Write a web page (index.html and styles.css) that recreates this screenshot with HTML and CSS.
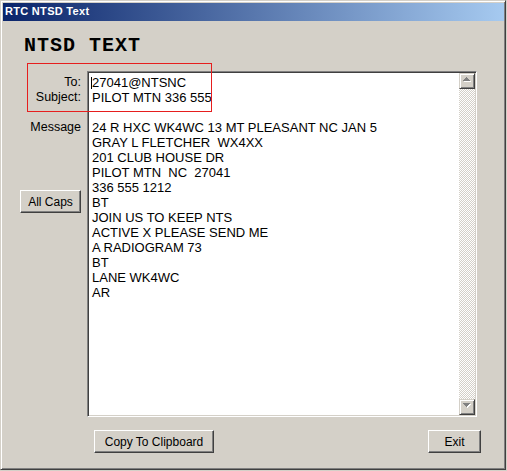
FILE: index.html
```html
<!DOCTYPE html>
<html>
<head>
<meta charset="utf-8">
<title>RTC NTSD Text</title>
<link rel="stylesheet" href="styles.css">
</head>
<body>
<div class="window">
  <div class="titlebar">RTC NTSD Text</div>
  <div class="client">
    <div class="heading">NTSD TEXT</div>
    <div class="main">
      <div class="side">
        <div class="labels">
          <div class="label">To:</div>
          <div class="label">Subject:</div>
          <div class="label"></div>
          <div class="label">Message</div>
        </div>
        <button class="btn allcaps">All Caps</button>
      </div>
      <div class="textbox">
        <div class="text"><span class="caret"></span>27041@NTSNC
PILOT MTN 336 555

24 R HXC WK4WC 13 MT PLEASANT NC JAN 5
GRAY L FLETCHER  WX4XX
201 CLUB HOUSE DR
PILOT MTN  NC  27041
336 555 1212
BT
JOIN US TO KEEP NTS
ACTIVE X PLEASE SEND ME
A RADIOGRAM 73
BT
LANE WK4WC
AR</div>
        <div class="scrollbar">
          <div class="sbtn">
            <svg width="14" height="14" viewBox="0 0 14 14" shape-rendering="crispEdges">
              <path d="M7 4h1v1h-1z M6 5h3v1h-3z M5 6h5v1h-5z M4 7h7v1h-7z" fill="#fff"/>
              <path d="M6 3h1v1h-1z M5 4h3v1h-3z M4 5h5v1h-5z M3 6h7v1h-7z" fill="#808080"/>
            </svg>
          </div>
          <div class="track"></div>
          <div class="sbtn">
            <svg width="14" height="14" viewBox="0 0 14 14" shape-rendering="crispEdges">
              <path d="M4 4h7v1h-7z M5 5h5v1h-5z M6 6h3v1h-3z M7 7h1v1h-1z" fill="#fff"/>
              <path d="M3 3h7v1h-7z M4 4h5v1h-5z M5 5h3v1h-3z M6 6h1v1h-1z" fill="#808080"/>
            </svg>
          </div>
        </div>
      </div>
      <div class="redbox"></div>
    </div>
    <div class="buttons">
      <button class="btn copy">Copy To Clipboard</button>
      <button class="btn exit">Exit</button>
    </div>
  </div>
</div>
</body>
</html>
```

FILE: styles.css
```css
html, body {
  margin: 0;
  padding: 0;
  background: #d4d0c8;
}

.window {
  width: 506px;
  height: 470px;
  box-sizing: border-box;
  border: 1px solid;
  border-color: #d4d0c8 #404040 #404040 #d4d0c8;
  box-shadow: inset 1px 1px #ffffff, inset -1px -1px #808080;
  padding: 2px 1px 2px 2px;
  background: #d4d0c8;
  display: flex;
  flex-direction: column;
  font-family: "Liberation Sans", Arial, sans-serif;
  color: #000;
}

.titlebar {
  height: 18px;
  line-height: 16px;
  padding-left: 2px;
  background: linear-gradient(to right, #0a246a, #a6caf0);
  color: #fff;
  font-weight: bold;
  font-size: 11px;
  letter-spacing: 0.3px;
  white-space: nowrap;
}

.client {
  flex: 1;
}

.heading {
  margin: 15px 0 0 21px;
  height: 20px;
  line-height: 20px;
  font-family: "Liberation Mono", "Courier New", monospace;
  font-weight: bold;
  font-size: 20px;
  letter-spacing: 1px;
}

.main {
  position: relative;
  display: flex;
  margin-top: 15px;
}

.side {
  width: 84px;
  padding-top: 4px;
}

.labels {
  text-align: right;
  padding-right: 6px;
  font-size: 12.5px;
}

.label {
  height: 15px;
  line-height: 15px;
  white-space: nowrap;
}

.btn {
  display: block;
  box-sizing: border-box;
  height: 23px;
  padding: 1px 0 0;
  margin: 0;
  border: 1px solid;
  border-color: #ffffff #404040 #404040 #ffffff;
  box-shadow: inset -1px -1px #808080;
  background: #d4d0c8;
  font-family: "Liberation Sans", Arial, sans-serif;
  font-size: 12px;
  line-height: 20px;
  color: #000;
  white-space: nowrap;
}

.allcaps {
  width: 61px;
  margin: 55px 0 0 17px;
}

.textbox {
  width: 390px;
  height: 346px;
  box-sizing: border-box;
  border: 1px solid;
  border-color: #808080 #ffffff #ffffff #808080;
  box-shadow: inset 1px 1px #404040, inset -1px -1px #d4d0c8;
  padding: 1px;
  background: #fff;
  display: flex;
}

.text {
  position: relative;
  flex: 1;
  padding: 2px 0 0 3px;
  font-size: 13px;
  line-height: 15px;
  white-space: pre;
  overflow: hidden;
}

.caret {
  position: absolute;
  left: 2px;
  top: 4px;
  width: 1px;
  height: 12px;
  background: #000;
}

.scrollbar {
  width: 16px;
  display: flex;
  flex-direction: column;
}

.sbtn {
  width: 16px;
  height: 16px;
  box-sizing: border-box;
  border: 1px solid;
  border-color: #d4d0c8 #404040 #404040 #d4d0c8;
  box-shadow: inset 1px 1px #ffffff, inset -1px -1px #808080;
  background: #d4d0c8;
}

.sbtn svg {
  display: block;
}

.track {
  flex: 1;
  background: repeating-conic-gradient(#d4d0c8 0 25%, #ffffff 0 50%) 0 0 / 2px 2px;
}

.redbox {
  position: absolute;
  left: 24px;
  top: -8px;
  width: 185px;
  height: 49px;
  box-sizing: border-box;
  border: 1px solid rgb(230, 30, 30);
  box-shadow: inset 0 0 0 0 transparent;
}

.buttons {
  display: flex;
  margin-top: 13px;
  padding-left: 91px;
}

.copy {
  width: 120px;
}

.exit {
  width: 53px;
  margin-left: 214px;
}
```
